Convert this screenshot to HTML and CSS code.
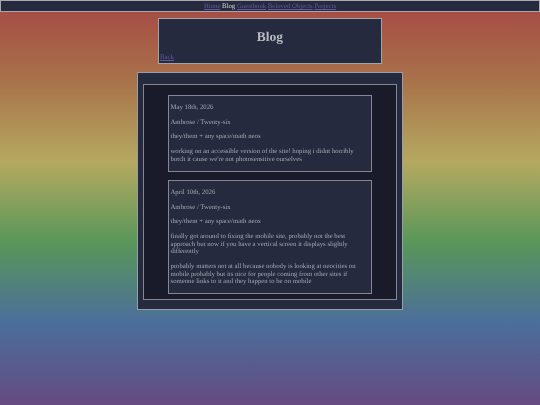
FILE: index.html
```html
<!DOCTYPE html>
<html lang="en">
<head>
<meta charset="utf-8">
<title>Blog</title>
<link rel="stylesheet" href="styles.css">
</head>
<body>
<nav class="nav"><a href="#">Home</a> <span>Blog</span> <a href="#">Guestbook</a> <a href="#">Beloved Objects</a> <a href="#">Projects</a></nav>
<header class="head">
<h1>Blog</h1>
<a href="#">Back</a>
</header>
<main class="outer">
<div class="inner">
<article class="post">
<p>May 18th, 2026</p>
<p>Ambrose / Twenty-six</p>
<p>they/them + any space/math neos</p>
<p>working on an accessible version of the site! hoping i didnt horribly botch it cause we're not photosensitive ourselves</p>
</article>
<article class="post">
<p>April 10th, 2026</p>
<p>Ambrose / Twenty-six</p>
<p>they/them + any space/math neos</p>
<p>finally got around to fixing the mobile site, probably not the best approach but now if you have a vertical screen it displays slightly differently</p>
<p>probably matters not at all because nobody is looking at neocities on mobile probably but its nice for people coming from other sites if someone links to it and they happen to be on mobile</p>
</article>
</div>
</main>
</body>
</html>
```
FILE: styles.css
```css
html {
  height: 405px;
  overflow: hidden;
  background: linear-gradient(180deg, #a64845 0%, #a8724a 20%, #b5a960 40%, #58965a 60%, #4b6e9b 80%, #654a80 100%);
}
body {
  margin: 0;
  height: 405px;
  overflow: hidden;
  filter: blur(0.4px);
  font-family: "Liberation Serif", serif;
  font-size: 6.75px;
  line-height: 7.76px;
  text-rendering: geometricPrecision;
  color: #a4a6ae;
}
a { color: #65579f; }
.nav {
  box-sizing: border-box;
  height: 12px;
  background: #252a3f;
  border: 1px solid #a9a9ad;
  text-align: center;
  line-height: 11px;
}
.nav span { color: #d8d8dc; }
.head {
  box-sizing: border-box;
  width: 224px;
  height: 46px;
  margin: 6px auto 8px;
  padding: 0 1px;
  background: #252a3f;
  border: 1px solid #a3a3a8;
}
.head h1 {
  margin: 0;
  padding-top: 9px;
  height: 26px;
  font-size: 13.5px;
  line-height: 17px;
  text-align: center;
  color: #b9bac0;
}
.head a { display: block; }
.outer {
  box-sizing: border-box;
  width: 266px;
  margin: 0 auto;
  padding: 11px 5px 9.5px;
  background: #252a3f;
  border: 1px solid #9a9ea8;
}
.inner {
  padding: 10px 24px 4.5px;
  background: #191a2a;
  border: 1px solid #85868f;
  display: flex;
  flex-direction: column;
  gap: 8.5px;
}
.post {
  padding: 1.5px 5px 0.5px 1.5px;
  background: #252a3f;
  border: 1px solid #85868f;
}
.post p { margin: 6.75px 0; }
```
